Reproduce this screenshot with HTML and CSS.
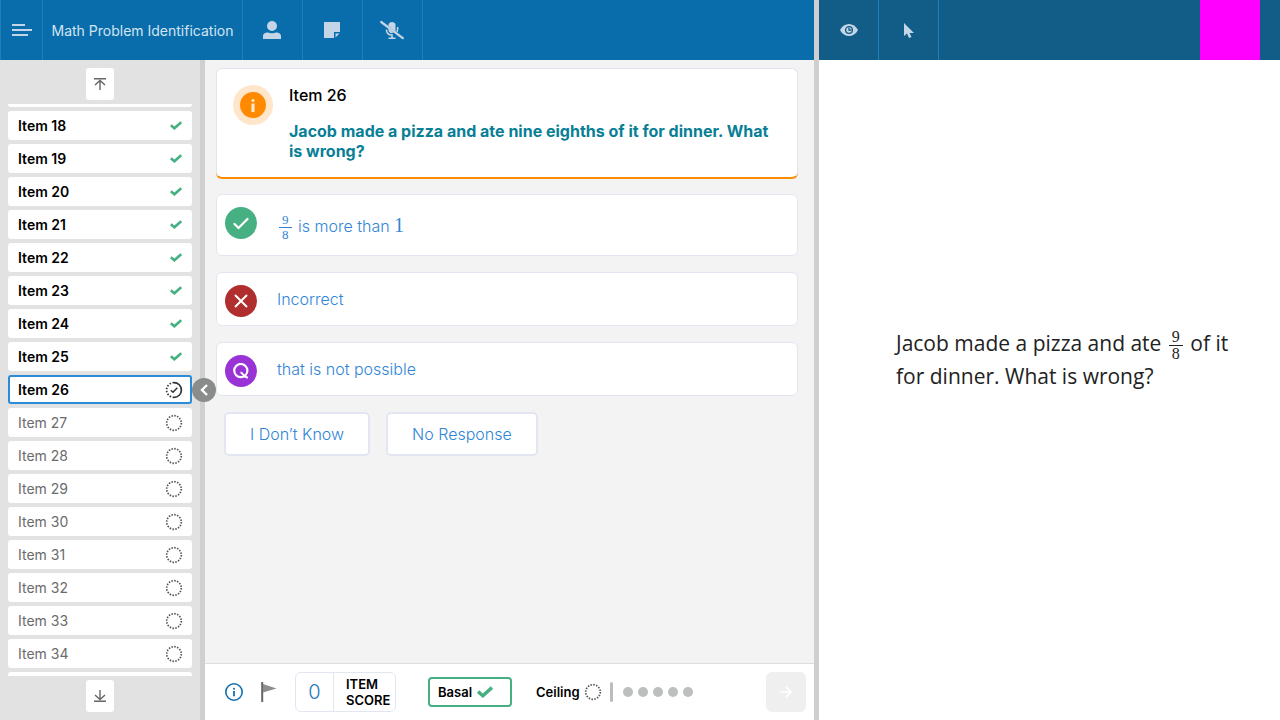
FILE: index.html
```html
<!DOCTYPE html>
<html lang="en">
<head>
<meta charset="utf-8">
<meta name="viewport" content="width=device-width, initial-scale=1">
<title>Math Problem Identification</title>
<link rel="stylesheet" href="styles.css">
</head>
<body>
<svg class="defs" aria-hidden="true">
  <symbol id="tick" viewBox="0 0 12 9"><path d="M.8 4.200 4.400 7.300 11.200 1.200" fill="none" stroke="currentColor" stroke-width="2.600"/></symbol>
  <symbol id="dotted" viewBox="0 0 18 18"><circle cx="9" cy="9" r="7.300" fill="none" stroke="currentColor" stroke-width="1.700" stroke-dasharray="1.500 1.367"/></symbol>
</svg>
<div class="app">
  <div class="examiner">
    <header class="bar">
      <button class="cell cell-menu" aria-label="Menu"><svg width="20" height="12" viewBox="0 0 20 12"><path d="M0 1h13M0 6h20M0 11h16" stroke="currentColor" stroke-width="2"/></svg></button>
      <h1 class="cell cell-title">Math Problem Identification</h1>
      <button class="cell" aria-label="Examinee"><svg width="18" height="18" viewBox="0 0 18 18"><circle cx="9" cy="5" r="5" fill="currentColor"/><path d="M0 18v-2.500C0 12.500 2 11.500 5 11.500c2 1 6 1 8 0 3 0 5 1 5 4V18z" fill="currentColor"/></svg></button>
      <button class="cell" aria-label="Notes"><svg width="16" height="16" viewBox="0 0 16 16"><path d="M0 0h16v10h-6v6H0z" fill="currentColor"/><path d="M11.500 15.500v-4h4z" fill="currentColor"/></svg></button>
      <button class="cell" aria-label="Microphone off"><svg width="24" height="20" viewBox="0 0 24 20"><path d="M8.500 4a4 4 0 0 1 7 0v7.500L8.500 6zM8.500 8.500l5 4.200c-2.500 1.300-5-.5-5-2.700z" fill="currentColor"/><path d="M6.500 9.500c0 4 2 5.500 5.500 5.500v3M8.500 18.300h7M17.700 7c0 2 .1 3.500-.8 5" fill="none" stroke="currentColor" stroke-width="1.600"/><path d="M1.200 2 22.800 18.200" stroke="currentColor" stroke-width="2.200" stroke-linecap="round"/></svg></button>
    </header>
    <div class="workspace">
      <nav class="sidebar" aria-label="Items">
        <button class="jump" aria-label="First item"><svg width="12" height="12" viewBox="0 0 12 12"><path d="M0 .7h12M6 12V2.500M1 7l5-4.500L11 7" fill="none" stroke="currentColor" stroke-width="1.400"/></svg></button>
        <div class="viewport">
          <ul class="items">
            <li><button class="item done">Item 17<svg class="tick"><use href="#tick"/></svg></button></li>
            <li><button class="item done">Item 18<svg class="tick"><use href="#tick"/></svg></button></li>
            <li><button class="item done">Item 19<svg class="tick"><use href="#tick"/></svg></button></li>
            <li><button class="item done">Item 20<svg class="tick"><use href="#tick"/></svg></button></li>
            <li><button class="item done">Item 21<svg class="tick"><use href="#tick"/></svg></button></li>
            <li><button class="item done">Item 22<svg class="tick"><use href="#tick"/></svg></button></li>
            <li><button class="item done">Item 23<svg class="tick"><use href="#tick"/></svg></button></li>
            <li><button class="item done">Item 24<svg class="tick"><use href="#tick"/></svg></button></li>
            <li><button class="item done">Item 25<svg class="tick"><use href="#tick"/></svg></button></li>
            <li><button class="item done current" aria-current="true">Item 26<svg class="ring" viewBox="0 0 18 18"><path d="M9 1.600A7.400 7.400 0 0 0 9 16.400" fill="none" stroke="currentColor" stroke-width="1.700" stroke-dasharray="1.500 1.600"/><path d="M9 1.600A7.400 7.400 0 1 1 9 16.400" fill="none" stroke="currentColor" stroke-width="1.700"/><path d="M5.800 9.200 8 11.200l4.300-4.400" fill="none" stroke="currentColor" stroke-width="1.500"/></svg></button></li>
            <li><button class="item">Item 27<svg class="ring"><use href="#dotted"/></svg></button></li>
            <li><button class="item">Item 28<svg class="ring"><use href="#dotted"/></svg></button></li>
            <li><button class="item">Item 29<svg class="ring"><use href="#dotted"/></svg></button></li>
            <li><button class="item">Item 30<svg class="ring"><use href="#dotted"/></svg></button></li>
            <li><button class="item">Item 31<svg class="ring"><use href="#dotted"/></svg></button></li>
            <li><button class="item">Item 32<svg class="ring"><use href="#dotted"/></svg></button></li>
            <li><button class="item">Item 33<svg class="ring"><use href="#dotted"/></svg></button></li>
            <li><button class="item">Item 34<svg class="ring"><use href="#dotted"/></svg></button></li>
            <li><button class="item">Item 35<svg class="ring"><use href="#dotted"/></svg></button></li>
          </ul>
        </div>
        <button class="jump" aria-label="Last item"><svg width="12" height="12" viewBox="0 0 12 12"><path d="M0 11.300h12M6 0v9.500M1 5l5 4.500L11 5" fill="none" stroke="currentColor" stroke-width="1.400"/></svg></button>
        <button class="collapse" aria-label="Collapse item list"><svg width="8" height="12" viewBox="0 0 8 12"><path d="M7 1 2 6l5 5" fill="none" stroke="currentColor" stroke-width="2.400"/></svg></button>
      </nav>
      <div class="panel">
        <main class="content">
          <section class="prompt">
            <span class="badge-halo"><svg width="26" height="26" viewBox="0 0 26 26"><circle cx="13" cy="13" r="13" fill="#ff8a00"/><circle cx="13" cy="8.500" r="1.600" fill="#ffe5c9"/><path d="M11.400 11.500h3.200V20h-3.200z" fill="#ffe5c9"/></svg></span>
            <div>
              <h2 class="prompt-title">Item 26</h2>
              <p class="prompt-text">Jacob made a pizza and ate nine eighths of it for dinner. What is wrong?</p>
            </div>
          </section>
          <button class="answer answer-tall">
            <span class="mark mark-correct"><svg width="16" height="13" viewBox="0 0 16 13"><path d="M1.500 7 5.500 11 14.500 2" fill="none" stroke="currentColor" stroke-width="2.200" stroke-linecap="round"/></svg></span>
            <span class="answer-text"><span class="frac"><span>9</span><span>8</span></span> is more than <span class="math">1</span></span>
          </button>
          <button class="answer">
            <span class="mark mark-incorrect"><svg width="14" height="14" viewBox="0 0 14 14"><path d="M1 1l12 12M13 1 1 13" stroke="currentColor" stroke-width="2"/></svg></span>
            <span class="answer-text">Incorrect</span>
          </button>
          <button class="answer">
            <span class="mark mark-query"><svg width="16" height="16" viewBox="0 0 16 16"><circle cx="7.800" cy="7.600" r="6.600" fill="none" stroke="currentColor" stroke-width="2.200"/><path d="M7.500 9.500c3 0 3 5.500 7.500 5" fill="none" stroke="currentColor" stroke-width="2"/></svg></span>
            <span class="answer-text">that is not possible</span>
          </button>
          <div class="choices">
            <button class="choice">I Don’t Know</button>
            <button class="choice">No Response</button>
          </div>
        </main>
        <footer class="footer">
          <button class="icon info" aria-label="Information"><svg width="18" height="18" viewBox="0 0 18 18"><circle cx="9" cy="9" r="8.200" fill="none" stroke="currentColor" stroke-width="1.600"/><circle cx="9" cy="5.800" r="1" fill="currentColor"/><path d="M9 8v5.300" stroke="currentColor" stroke-width="1.800"/></svg></button>
          <button class="icon flag" aria-label="Flag item"><svg width="16" height="20" viewBox="0 0 16 20"><path d="M1.200 0v20" stroke="#666" stroke-width="2"/><path d="M2 2l13.500 4.500L2 10.500z" fill="#8e8e8e"/></svg></button>
          <div class="score">
            <input class="score-value" id="score" type="text" value="0">
            <label class="score-label" for="score">ITEM SCORE</label>
          </div>
          <button class="basal">Basal<svg class="basal-tick"><use href="#tick"/></svg></button>
          <div class="ceiling">
            <span>Ceiling</span><svg class="ring"><use href="#dotted"/></svg>
            <span class="rule"></span>
            <span class="dots"><i></i><i></i><i></i><i></i><i></i></span>
          </div>
          <button class="next" aria-label="Next item" disabled><svg width="12" height="12" viewBox="0 0 12 12"><path d="M0 6h11M6 1l5 5-5 5" fill="none" stroke="currentColor" stroke-width="1.600"/></svg></button>
        </footer>
      </div>
    </div>
  </div>
  <div class="examinee">
    <header class="bar bar-dark">
      <button class="cell" aria-label="Preview"><svg width="18" height="12" viewBox="0 0 18 12"><path d="M0 6C4-2 14-2 18 6 14 14 4 14 0 6z" fill="currentColor"/><circle cx="9" cy="6" r="3.400" fill="none" stroke="#125c88" stroke-width="1.300"/><path d="M9 3.500V6h2.500" fill="none" stroke="#125c88" stroke-width="1.300"/></svg></button>
      <button class="cell" aria-label="Pointer"><svg width="10" height="15" viewBox="0 0 10 15"><path d="M0 0v13l3-2.500L5 15l2.500-1-2-4H10z" fill="currentColor"/></svg></button>
      <button class="swatch" aria-label="Magenta"></button>
    </header>
    <div class="stage">
      <p class="stimulus">Jacob made a pizza and ate <span class="frac"><span>9</span><span>8</span></span> of it for dinner. What is wrong?</p>
    </div>
  </div>
</div>
</body>
</html>
```
FILE: styles.css
```css
* { box-sizing: border-box; }
body { margin: 0; font-family: Inter, "Liberation Sans", sans-serif; background: #fff; }
button { font: inherit; color: inherit; border: 0; padding: 0; background: none; text-align: left; }
h1, h2, p, ul { margin: 0; padding: 0; list-style: none; }
svg { display: block; flex: none; }
.defs { position: absolute; width: 0; height: 0; }

.app { display: grid; grid-template-columns: minmax(0, 814fr) minmax(0, 466fr); height: 100vh; }
.examiner { display: flex; flex-direction: column; min-height: 0; }
.examinee { display: flex; flex-direction: column; border-left: 5px solid #cfcfcf; }

.bar { display: flex; flex: none; height: 60px; background: #0a6dab; color: #c3d5e6; }
.cell { display: flex; align-items: center; justify-content: center; width: 60px; padding-right: 1px; border-right: 1px solid #1c80b9; }
.cell-menu { width: 43px; padding: 0; border-left: 1px solid #1c80b9; }
.cell-title { width: 200px; padding: 0; font-size: 14px; font-weight: 400; color: #d3e4f1; white-space: nowrap; }
.bar-dark { background: #125c88; padding-right: 20px; }
.bar-dark .cell { padding: 0; }
.swatch { width: 60px; margin-left: auto; background: #f0f; }

.workspace { display: flex; flex: 1; min-height: 0; }
.sidebar { position: relative; display: flex; flex-direction: column; align-items: center; width: 205px; padding: 8px 8px; background: #e2e2e2; border-right: 5px solid #cfcfcf; }
.jump { display: flex; align-items: center; justify-content: center; flex: none; width: 28px; height: 32px; border-radius: 3px; background: #fff; color: #666; }
.viewport { flex: 1; align-self: stretch; min-height: 0; margin: 4px 0; overflow: hidden; }
.items { display: flex; flex-direction: column; gap: 4px; margin-top: -26px; }
.item { display: flex; align-items: center; justify-content: space-between; width: 100%; height: 29px; padding: 0 9px 0 10px; border-radius: 3px; background: #fff; color: #6b6b6b; font-size: 14px; }
.done { color: #000; font-weight: 600; }
.current { border: 2px solid #2a8bd8; padding: 0 7px 0 8px; }
.tick { width: 12px; height: 9px; margin-right: 1px; color: #46b083; }
.ring { width: 18px; height: 18px; color: #555; }
.current .ring { color: #333; }
.collapse { position: absolute; right: -16px; top: 50%; transform: translateY(-50%); display: flex; align-items: center; justify-content: center; width: 24px; height: 24px; border-radius: 50%; background: #8a8c8c; color: #fff; }

.panel { display: flex; flex: 1; flex-direction: column; min-width: 0; background: #f3f3f3; }
.content { display: flex; flex: 1; flex-direction: column; gap: 16px; padding: 8px 16px 8px 11px; }
.prompt { display: flex; gap: 16px; padding: 16px; border: 1px solid #e2e6f0; border-radius: 6px; background: #fff; box-shadow: 0 1px 0 #fb8c00; border-bottom-color: #fb8c00; }
.badge-halo { display: flex; align-items: center; justify-content: center; flex: none; width: 40px; height: 40px; border-radius: 50%; background: #ffe5c9; }
.prompt-title { font-size: 16px; line-height: 20px; font-weight: 500; color: #000; }
.prompt-text { margin-top: 16px; font-size: 16px; line-height: 20px; font-weight: 750; color: #087f96; }
.answer { display: flex; align-items: flex-start; gap: 20px; min-height: 54px; padding: 12px 8px 8px; border: 1px solid #e2e6f0; border-radius: 6px; background: #fff; color: #2f86d6; }
.answer-tall { min-height: 62px; }
.answer-text { font-size: 16px; line-height: 28px; font-weight: 350; }
.answer-tall .answer-text { line-height: 38px; }
.mark { display: flex; align-items: center; justify-content: center; flex: none; width: 32px; height: 32px; border-radius: 50%; color: #fff; }
.mark-correct { background: #46b083; }
.mark-incorrect { background: #b02e2e; }
.mark-query { background: #9a33d6; }
.math { font-family: "Liberation Serif", serif; font-size: 20px; line-height: 20px; font-weight: 400; }
.frac { display: inline-flex; flex-direction: column; vertical-align: middle; margin: 0 2px; font-family: "Liberation Serif", serif; font-size: 13px; line-height: 14px; font-weight: 400; text-align: center; }
.frac span { padding: 0 3px; }
.frac span + span { border-top: 1px solid currentColor; }
.choices { display: flex; gap: 16px; padding-left: 8px; }
.choice { height: 44px; padding: 0 24px; border: 2px solid #e2e6f0; border-radius: 5px; background: #fff; color: #2f86d6; font-size: 16px; font-weight: 350; }

.footer { display: flex; align-items: center; padding: 8px 8px 8px 20px; border-top: 1px solid #dedede; background: #fff; font-size: 13px; font-weight: 600; color: #000; }
.info { color: #0f70b0; }
.flag { margin-left: 18px; }
.score { display: flex; width: 101px; height: 40px; margin-left: 18px; border: 1px solid #e2e6f0; border-radius: 6px; }
.score-value { width: 38px; padding: 0; border: 0; border-right: 1px solid #e2e6f0; border-radius: 6px 0 0 6px; background: none; color: #1f78c1; font: 300 20px Inter, sans-serif; text-align: center; }
.score-label { flex: 1; align-self: center; padding-left: 12px; line-height: 16px; }
.basal { display: flex; align-items: center; gap: 5px; width: 84px; height: 30px; margin-left: 32px; padding: 0 8px; border: 2px solid #46b083; border-radius: 4px; }
.basal-tick { width: 16px; height: 12px; color: #46b083; }
.ceiling { display: flex; align-items: center; gap: 4px; margin-left: 24px; }
.rule { width: 3px; height: 20px; margin-left: 4px; border-radius: 2px; background: #bcbcbc; }
.dots { display: flex; gap: 5px; margin-left: 6px; }
.dots i { width: 10px; height: 10px; border-radius: 50%; background: #bdbfbe; }
.next { display: flex; align-items: center; justify-content: center; width: 40px; height: 40px; margin-left: auto; border-radius: 6px; background: #efefef; color: #fff; }

.stage { display: flex; flex: 1; align-items: center; padding: 0 40px 60px 77px; }
.stimulus { font-family: "Open Sans", sans-serif; font-size: 21px; line-height: 33px; color: #222; }
.stimulus .frac { margin: -4px 2px; font-size: 16px; line-height: 16px; }
```
